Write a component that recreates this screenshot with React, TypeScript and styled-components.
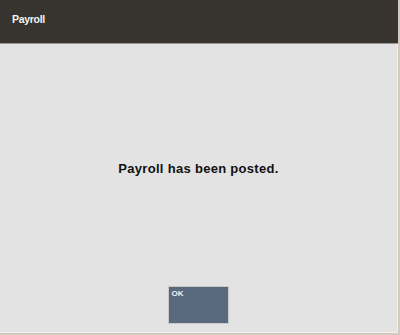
import React from "react";
import styled, { createGlobalStyle } from "styled-components";

const Global = createGlobalStyle`
  html, body { margin: 0; padding: 0; background: #e3e3e3; }
  body { font-family: "Liberation Sans", Arial, sans-serif; }
`;

const Frame = styled.div`
  width: 400px;
  height: 335px;
  box-sizing: border-box;
  display: flex;
  flex-direction: column;
  border-right: 2px solid #d3c9bf;
  border-bottom: 2px solid #d3c9bf;
  background: #e3e3e3;
`;

const Header = styled.div`
  height: 44px;
  flex: none;
  background: #373430;
  border-bottom: 1px solid #9a9894;
  display: flex;
  align-items: center;
  padding-left: 12px;
  box-sizing: border-box;
`;

const Title = styled.div`
  color: #f4f4f4;
  font-weight: bold;
  font-size: 10.5px;
  letter-spacing: -0.3px;
  margin-top: -5px;
`;

const Body = styled.div`
  flex: 1;
  display: flex;
  flex-direction: column;
  align-items: center;
  border-right: 1px solid #f0f0f0;
  border-bottom: 1px solid #f0f0f0;
`;

const Message = styled.div`
  margin-top: 117px;
  font-size: 13px;
  line-height: 16px;
  font-weight: bold;
  color: #111;
  letter-spacing: 0.3px;
`;

const OkButton = styled.button`
  margin-top: 109px;
  margin-left: -1px;
  width: 61px;
  height: 38px;
  background: #5a697d;
  border: 1px solid #c9c9c9;
  color: #f2f2f2;
  font-family: "Liberation Sans", Arial, sans-serif;
  font-size: 8px;
  font-weight: bold;
  text-align: left;
  display: flex;
  align-items: flex-start;
  padding: 2px 3px;
  box-sizing: border-box;
`;

export default function App() {
  return (
    <>
      <Global />
      <Frame>
        <Header>
          <Title>Payroll</Title>
        </Header>
        <Body>
          <Message>Payroll has been posted.</Message>
          <OkButton>OK</OkButton>
        </Body>
      </Frame>
    </>
  );
}
